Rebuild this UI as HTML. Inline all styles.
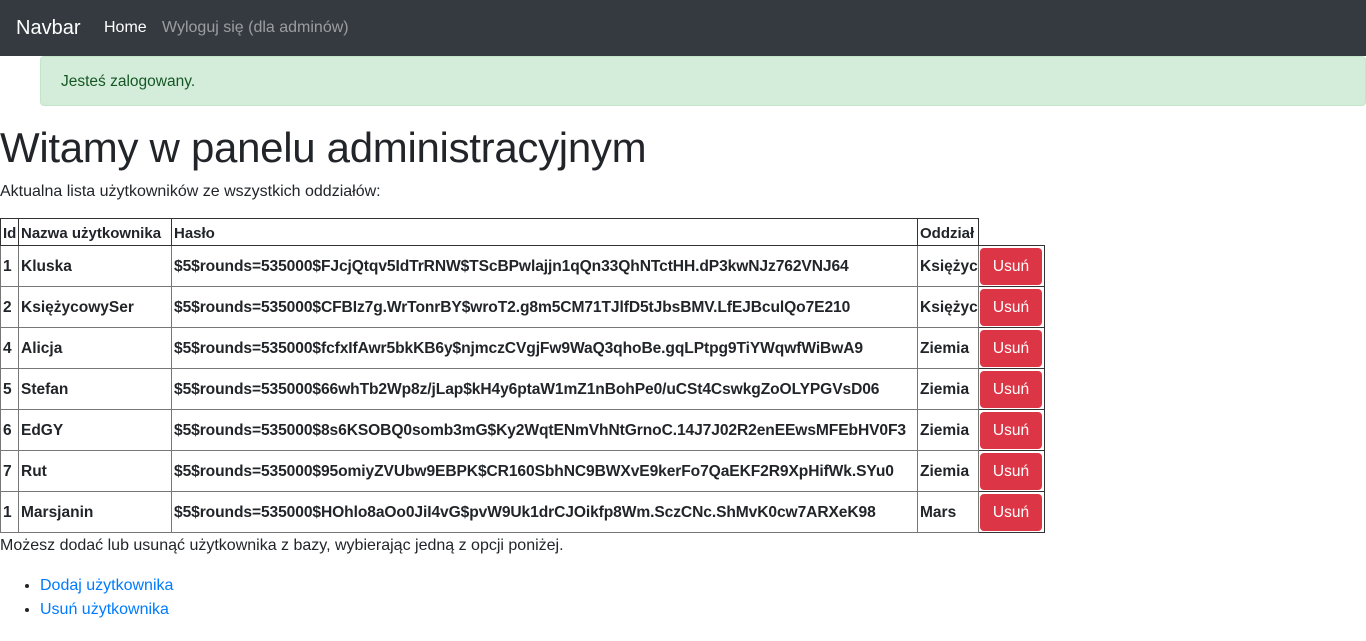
<!DOCTYPE html>
<html><head><meta charset="utf-8"><style>
*{box-sizing:border-box;margin:0;padding:0}
body{width:1366px;height:641px;overflow:hidden;background:#fff;font-family:"Liberation Sans",sans-serif;color:#212529;font-size:15px;position:relative}
.nav{position:absolute;left:0;top:0;width:1366px;height:56px;background:#343a40}
.nav span{position:absolute;top:17px;white-space:nowrap}
.alert{position:absolute;left:40px;top:56px;width:1326px;height:50px;background:#d4edda;border:1px solid #c3e6cb;border-radius:4px;color:#155724;padding:16px 20px;font-size:15.5px}
h1{position:absolute;left:0;top:124px;font-size:42px;font-weight:400;white-space:nowrap;letter-spacing:-0.3px}
.p{position:absolute;left:0;white-space:nowrap;font-size:16px}
table{position:absolute;left:0;top:218px;width:1044px;border-collapse:collapse;table-layout:fixed;font-weight:bold;font-size:15.5px}
td{border:1px solid #777;padding:2px 2px 0;white-space:nowrap;overflow:hidden;height:41px}
td.pw{font-size:15.6px;letter-spacing:-0.1px}
tr.h td{height:27px;border-color:#333;font-size:15px}
td.b{padding:1px;border-color:#333}
.btn{display:block;width:62px;height:37px;background:#dc3545;border-radius:4px;color:#fff;font-weight:400;font-size:15.5px;text-align:center;line-height:37px}
a{color:#007bff;text-decoration:none}
ul{position:absolute;left:40px;top:574px;list-style:disc;line-height:24px;font-size:16px}
</style></head><body>
<div class="nav"><span style="left:16px;top:17px;font-size:20px;color:#fff">Navbar</span><span style="left:104px;top:19px;color:#fff;font-size:16px">Home</span><span style="left:162px;top:19px;color:rgba(255,255,255,.5);font-size:16px">Wyloguj się (dla adminów)</span></div>
<div class="alert">Jesteś zalogowany.</div>
<h1>Witamy w panelu administracyjnym</h1>
<div class="p" style="top:183px">Aktualna lista użytkowników ze wszystkich oddziałów:</div>
<table>
<colgroup><col style="width:18px"><col style="width:153px"><col style="width:746px"><col style="width:61px"><col style="width:66px"></colgroup>
<tr class="h"><td>Id</td><td>Nazwa użytkownika</td><td>Hasło</td><td>Oddział</td><td style="border:none"></td></tr>
<tr><td>1</td><td>Kluska</td><td class="pw">$5$rounds=535000$FJcjQtqv5IdTrRNW$TScBPwlajjn1qQn33QhNTctHH.dP3kwNJz762VNJ64</td><td>Księżyc</td><td class="b"><span class="btn">Usuń</span></td></tr>
<tr><td>2</td><td>KsiężycowySer</td><td class="pw">$5$rounds=535000$CFBIz7g.WrTonrBY$wroT2.g8m5CM71TJlfD5tJbsBMV.LfEJBculQo7E210</td><td>Księżyc</td><td class="b"><span class="btn">Usuń</span></td></tr>
<tr><td>4</td><td>Alicja</td><td class="pw">$5$rounds=535000$fcfxIfAwr5bkKB6y$njmczCVgjFw9WaQ3qhoBe.gqLPtpg9TiYWqwfWiBwA9</td><td>Ziemia</td><td class="b"><span class="btn">Usuń</span></td></tr>
<tr><td>5</td><td>Stefan</td><td class="pw">$5$rounds=535000$66whTb2Wp8z/jLap$kH4y6ptaW1mZ1nBohPe0/uCSt4CswkgZoOLYPGVsD06</td><td>Ziemia</td><td class="b"><span class="btn">Usuń</span></td></tr>
<tr><td>6</td><td>EdGY</td><td class="pw">$5$rounds=535000$8s6KSOBQ0somb3mG$Ky2WqtENmVhNtGrnoC.14J7J02R2enEEwsMFEbHV0F3</td><td>Ziemia</td><td class="b"><span class="btn">Usuń</span></td></tr>
<tr><td>7</td><td>Rut</td><td class="pw">$5$rounds=535000$95omiyZVUbw9EBPK$CR160SbhNC9BWXvE9kerFo7QaEKF2R9XpHifWk.SYu0</td><td>Ziemia</td><td class="b"><span class="btn">Usuń</span></td></tr>
<tr><td>1</td><td>Marsjanin</td><td class="pw">$5$rounds=535000$HOhlo8aOo0JiI4vG$pvW9Uk1drCJOikfp8Wm.SczCNc.ShMvK0cw7ARXeK98</td><td>Mars</td><td class="b"><span class="btn">Usuń</span></td></tr>
</table>
<div class="p" style="top:537px">Możesz dodać lub usunąć użytkownika z bazy, wybierając jedną z opcji poniżej.</div>
<ul><li><a>Dodaj użytkownika</a></li><li><a>Usuń użytkownika</a></li></ul>
</body></html>
